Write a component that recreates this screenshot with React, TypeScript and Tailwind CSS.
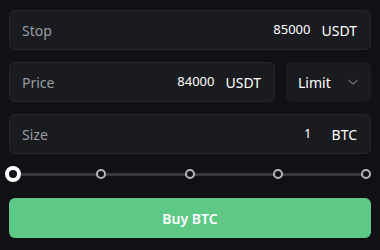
import React from "react";

function Field({ label, value, unit, gap = "gap-[11px]", className = "" }: { label: string; value: string; unit: string; gap?: string; className?: string }) {
  return (
    <div className={`flex h-[40px] items-center justify-between rounded-[6px] border border-[#25262b] bg-[#1a1b1f] pl-[12px] pr-[13px] ${className}`}>
      <span className="text-[14px] text-[#9b9da5]">{label}</span>
      <div className={`flex items-center text-white ${gap}`}>
        <span className="text-[13px]">{value}</span>
        <span className="text-[14px]">{unit}</span>
      </div>
    </div>
  );
}

export default function App() {
  const dots = [0, 1, 2, 3, 4];
  return (
    <div
      className="flex h-[250px] w-[380px] flex-col bg-[#111115] px-[9px] pt-[10px]"
      style={{ fontFamily: '"Noto Sans", sans-serif' }}
    >
      <Field label="Stop" value="85000" unit="USDT" />
      <div className="mt-[12px] flex gap-[11px]">
        <Field label="Price" value="84000" unit="USDT" className="flex-1" />
        <div className="flex h-[40px] w-[85px] items-center justify-between rounded-[6px] bg-[#1a1b1f] pl-[12px] pr-[12px]">
          <span className="text-[14px] text-white">Limit</span>
          <svg width="12" height="12" viewBox="0 0 12 12" fill="none">
            <path d="M2 4.5 L6 8 L10 4.5" stroke="#6b6d74" strokeWidth="1.2" strokeLinecap="round" strokeLinejoin="round" />
          </svg>
        </div>
      </div>
      <Field label="Size" value="1" unit="BTC" gap="gap-[20px]" className="mt-[12px]" />
      <div className="relative ml-[4px] mr-[5px] mt-[12px] h-[16px]">
        <div className="absolute left-0 right-0 top-[6.5px] h-[3px] bg-[#38393e]" />
        {dots.map((d) =>
          d === 0 ? (
            <div
              key={d}
              className="absolute top-0 h-[16px] w-[16px] -translate-x-1/2 rounded-full border-[4.5px] border-white bg-[#111115]"
              style={{ left: `${d * 25}%` }}
            />
          ) : (
            <div
              key={d}
              className="absolute top-[3px] h-[10px] w-[10px] -translate-x-1/2 rounded-full border-[2px] border-[#b4b5ba] bg-[#111115]"
              style={{ left: `${d * 25}%` }}
            />
          )
        )}
      </div>
      <button className="mt-[16px] flex h-[40px] items-center justify-center rounded-[6px] bg-[#5ec986] text-[14px] font-semibold text-white">
        Buy BTC
      </button>
    </div>
  );
}
